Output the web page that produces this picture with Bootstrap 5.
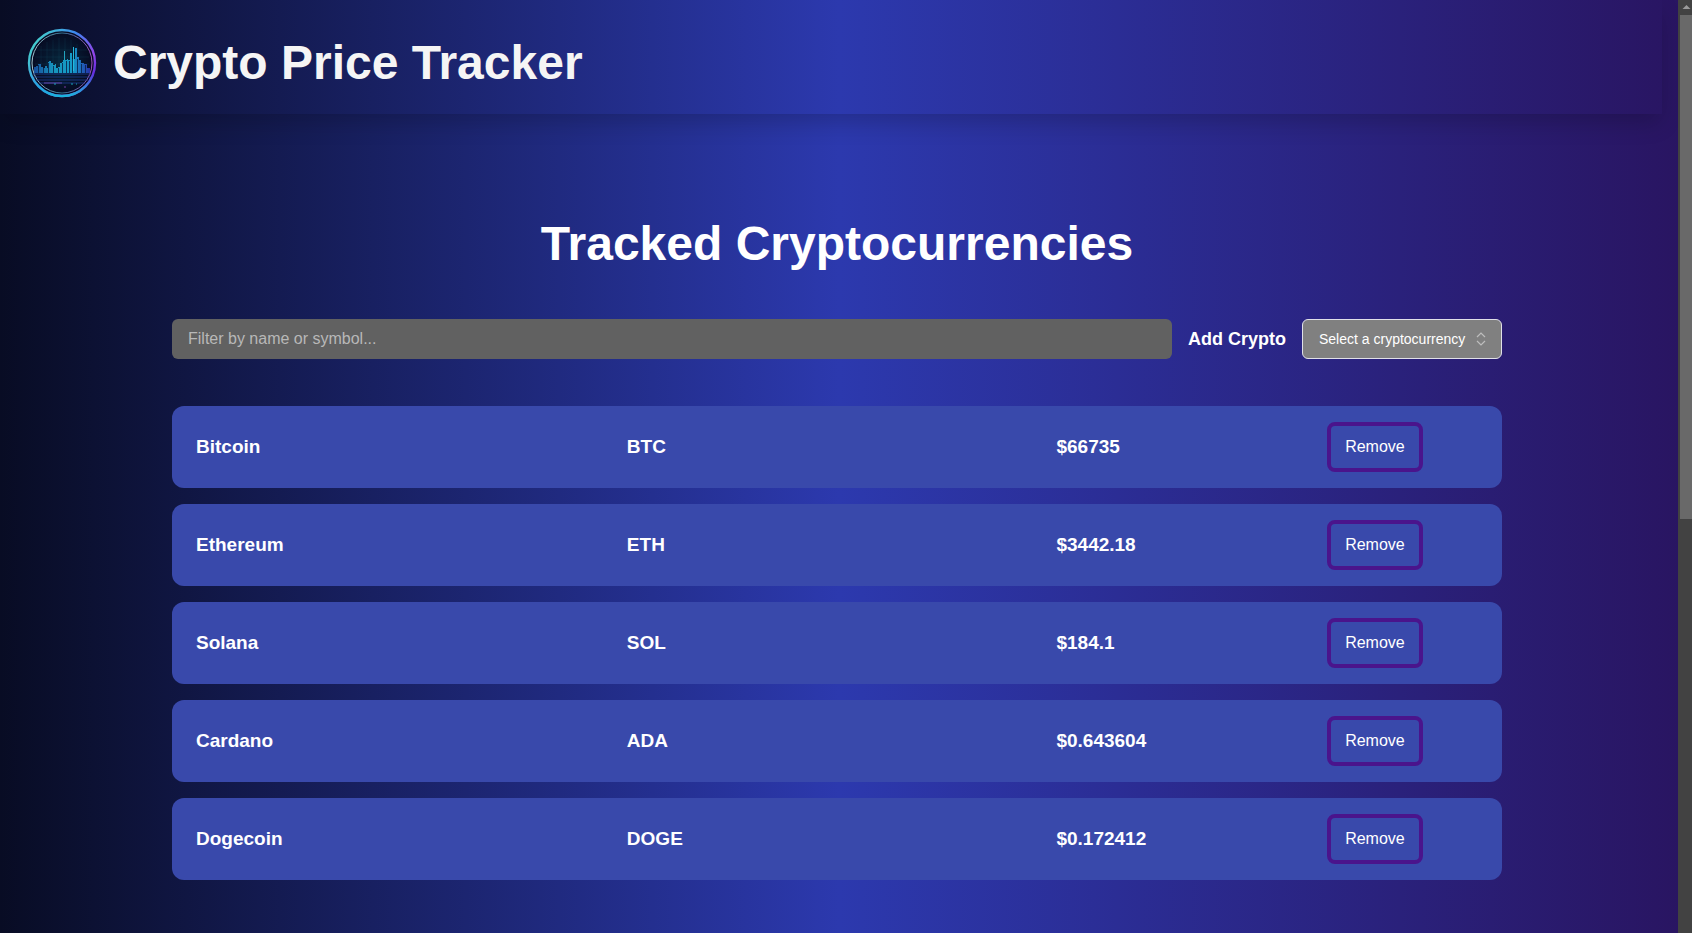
<!DOCTYPE html>
<html lang="en">
<head>
<meta charset="utf-8">
<meta name="viewport" content="width=device-width, initial-scale=1">
<title>Crypto Price Tracker</title>
<link href="https://cdn.jsdelivr.net/npm/bootstrap@5.3.0/dist/css/bootstrap.min.css" rel="stylesheet">
<style>
  body { font-family: "Liberation Sans", Arial, sans-serif; background: #424242; color: #fff; }
  .page-area { background: linear-gradient(90deg, #080c24 0%, #2c39ae 50%, #291562 100%); min-width: 0; }
  .site-header { margin-right: 16px; padding: 28px 16px 16px 27px; box-shadow: 0 10px 22px -2px rgba(0, 0, 0, .2); min-height: 114px; }
  .site-logo { width: 70px; height: 70px; }
  .site-title, .section-title { font-size: 48px; line-height: 56px; font-weight: 700; }
  .site-title { color: #f5f5f5; }
  .tracker { max-width: 1334px; padding-right: 4px; padding-top: 102px; }
  .toolbar { margin-top: 47px; }
  .filter-box, .filter-box:focus { height: 40px; padding: 0 16px; border: 0; border-radius: 6px; background: #616161; color: #fff; }
  .filter-box::placeholder { color: #b8b8b8; }
  .add-label { font-size: 18px; font-weight: 700; white-space: nowrap; }
  .crypto-select { width: 200px; height: 40px; padding: 0 32px 0 16px; font-size: 14px; color: #fff; border: 1px solid #e0e0e8; border-radius: 6px; background-color: #808080;
    background-image: url("data:image/svg+xml,%3Csvg xmlns='http://www.w3.org/2000/svg' viewBox='0 0 10 14'%3E%3Cpath d='M1 5 5 1l4 4M1 9l4 4 4-4' fill='none' stroke='%23bdbdbd' stroke-width='1.2'/%3E%3C/svg%3E"); background-size: 10px 14px; background-position: right 15px center; }
  .coins { table-layout: fixed; border-collapse: separate; border-spacing: 0 16px; margin-top: 31px; }
  .coins td { height: 82px; padding: 0; background: #3949ab; font-size: 19px; font-weight: 700; vertical-align: middle; }
  .coins td:first-child { padding-left: 24px; border-radius: 12px 0 0 12px; }
  .coins td:last-child { padding-right: 24px; border-radius: 0 12px 12px 0; }
  .col-name { width: 34.2%; }
  .col-symbol { width: 32.3%; }
  .col-price { width: 16.2%; }
  .remove-btn, .remove-btn:hover { width: 96px; height: 50px; padding: 0; border: 4px solid #4a148c; border-radius: 8px; color: #fff; font-size: 16px; }
  .scroll-rail { width: 14px; background: #424242; padding-left: 2px; }
  .scroll-cap { height: 15px; padding-top: 5px; line-height: 0; }
  .scroll-thumb { height: 504px; background: #696969; }
</style>
</head>
<body class="d-flex min-vh-100">
<div class="page-area flex-grow-1">
  <header class="site-header d-flex align-items-center gap-3">
    <svg class="site-logo flex-shrink-0" viewBox="0 0 70 70" role="img" aria-label="Crypto Price Tracker logo">
      <defs>
        <linearGradient id="ring" x1="0" y1=".2" x2="1" y2=".8">
          <stop offset="0" stop-color="#45d6c8"/><stop offset=".45" stop-color="#3c86ef"/><stop offset=".8" stop-color="#9344e8"/><stop offset="1" stop-color="#4620d8"/>
        </linearGradient>
        <linearGradient id="low" x1="0" y1="0" x2="0" y2="1">
          <stop offset=".65" stop-color="#18b4dc" stop-opacity="0"/><stop offset="1" stop-color="#18b4dc"/>
        </linearGradient>
        <linearGradient id="inner" x1="0" y1="0" x2="1" y2="0">
          <stop offset="0" stop-color="#b8dfe8"/><stop offset=".5" stop-color="#357999"/><stop offset="1" stop-color="#b65fd4"/>
        </linearGradient>
        <linearGradient id="bars" x1="0" y1="0" x2="1" y2="0">
          <stop offset="0" stop-color="#174e9c"/><stop offset=".35" stop-color="#1796bd"/><stop offset=".7" stop-color="#159bc9"/><stop offset="1" stop-color="#2730a8"/>
        </linearGradient>
        <radialGradient id="disc"><stop offset="0" stop-color="#07283d"/><stop offset="1" stop-color="#060820"/></radialGradient>
      </defs>
      <circle cx="35" cy="35" r="33" fill="url(#disc)" stroke="url(#ring)" stroke-width="2.4"/>
      <circle cx="35" cy="35" r="33" fill="none" stroke="url(#low)" stroke-width="2.4"/>
      <circle cx="35" cy="35" r="30" fill="none" stroke="url(#inner)" stroke-width=".9"/>
      <path d="M14 18v26M20 14v30M26 12v32M32 10v34M38 10v34M44 12v32M50 16v28M10 22h50M8 29h54M8 36h54" stroke="#15566c" stroke-width=".4" opacity=".5"/>
      <path d="M7 45V39H9V38H11V36H14V39H16V40H18V38H20V40H21V34H22V33H24V35H26V37H28V36H29V40H31V39H33V35H35V34H36V32H40V31H41V32H43V25H45V31H46V19H47V31H48V20H50V29H52V32H54V35H57V36H60V40H63V45z" fill="url(#bars)"/>
      <path d="M11.500 37v8M16.500 40v5M21.500 35v10M26.500 38v7M31.500 40v5M35.500 35v10M39.500 33v12M42.500 33v12M45.500 31v14M50.500 31v14M54.500 36v9M58.500 37v8" stroke="#071c42" stroke-width=".8"/>
      <path d="M37.500 23v9M46.500 19v24" stroke="#29c4df" stroke-width=".8"/>
      <path d="M6 46h58M7 49h56M9 52h52M12 55h46" stroke="#203c91" stroke-width=".8"/>
      <path d="M17 55h18" stroke="#7952ba" stroke-width=".8"/>
      <path d="M27 56h2M44 56h2M49 56h1" stroke="#19a5ba" stroke-width="1"/>
      <circle cx="38" cy="59" r=".8" fill="#8740b5"/>
    </svg>
    <h1 class="site-title mb-0">Crypto Price Tracker</h1>
  </header>

  <main class="tracker mx-auto">
    <h2 class="section-title text-center mb-0">Tracked Cryptocurrencies</h2>
    <form class="toolbar d-flex align-items-center gap-3">
      <input type="text" class="filter-box form-control flex-grow-1" placeholder="Filter by name or symbol..." aria-label="Filter by name or symbol">
      <label class="add-label" for="add-crypto">Add Crypto</label>
      <select id="add-crypto" class="crypto-select form-select flex-shrink-0">
        <option selected>Select a cryptocurrency</option>
      </select>
    </form>
    <table class="coins w-100">
      <colgroup><col class="col-name"><col class="col-symbol"><col class="col-price"><col></colgroup>
      <tbody>
        <tr><td>Bitcoin</td><td>BTC</td><td>$66735</td><td class="text-center"><button type="button" class="btn remove-btn">Remove</button></td></tr>
        <tr><td>Ethereum</td><td>ETH</td><td>$3442.18</td><td class="text-center"><button type="button" class="btn remove-btn">Remove</button></td></tr>
        <tr><td>Solana</td><td>SOL</td><td>$184.1</td><td class="text-center"><button type="button" class="btn remove-btn">Remove</button></td></tr>
        <tr><td>Cardano</td><td>ADA</td><td>$0.643604</td><td class="text-center"><button type="button" class="btn remove-btn">Remove</button></td></tr>
        <tr><td>Dogecoin</td><td>DOGE</td><td>$0.172412</td><td class="text-center"><button type="button" class="btn remove-btn">Remove</button></td></tr>
      </tbody>
    </table>
  </main>
</div>
<div class="scroll-rail flex-shrink-0" aria-hidden="true">
  <div class="scroll-cap"><svg width="12" height="4" viewBox="0 0 12 4"><path d="M2.500 4 6.500 0l4 4z" fill="#9a9a9a"/></svg></div>
  <div class="scroll-thumb"></div>
</div>
<script src="https://cdn.jsdelivr.net/npm/bootstrap@5.3.0/dist/js/bootstrap.bundle.min.js"></script>
</body>
</html>
